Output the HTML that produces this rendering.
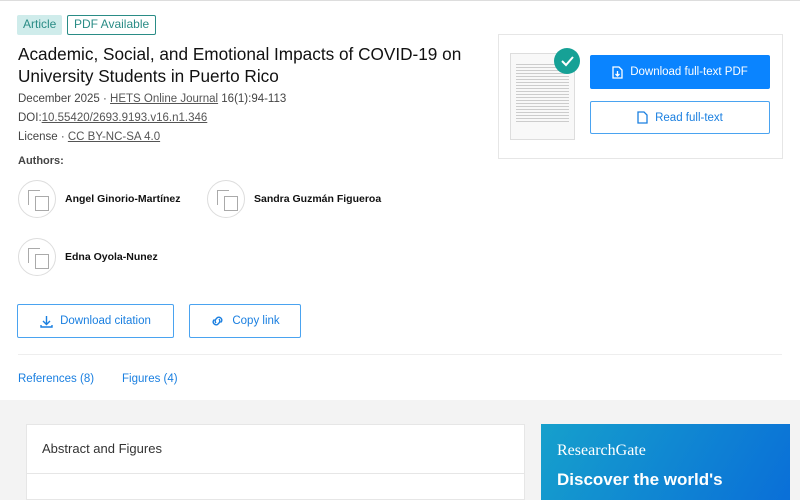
<!DOCTYPE html>
<html><head><meta charset="utf-8"><style>
*{box-sizing:border-box;margin:0;padding:0}
body{width:800px;height:500px;overflow:hidden;background:#f3f3f3;font-family:"Liberation Sans",sans-serif;color:#111;position:relative}
.card{position:absolute;left:0;top:0;width:800px;height:400px;background:#fff;border-top:1px solid #ddd}
.a{position:absolute}
.tag{position:absolute;top:14px;height:20px;font-size:12px;line-height:18px;padding:0 6px;border-radius:2px}
.meta{position:absolute;left:18px;font-size:11.5px;color:#444}
.meta u{color:#555}
.av{position:absolute;width:38px;height:38px;border:1px solid #ddd;border-radius:50%}
.av:before{content:"";position:absolute;left:9px;top:9px;width:11px;height:14px;border:1px solid #aaa;border-right:none;border-bottom:none}
.av:after{content:"";position:absolute;left:16px;top:15px;width:12px;height:13px;border:1px solid #aaa;background:#fff}
.nm{position:absolute;font-size:10.5px;font-weight:bold}
.btn{position:absolute;border:1px solid #4aa3f0;border-radius:2px;color:#1a7fe0;font-size:11.5px;display:flex;align-items:center;justify-content:center;gap:7px}
</style></head><body>
<div class="card">
<div class="tag" style="left:17px;background:#cfeceb;color:#2a8c86">Article</div>
<div class="tag" style="left:67px;border:1px solid #2a8c86;color:#2a8c86;line-height:17px">PDF Available</div>
<div class="a" style="left:18px;top:42px;font-size:17.2px;line-height:22px;color:#111;width:470px">Academic, Social, and Emotional Impacts of COVID-19 on University Students in Puerto Rico</div>
<div class="meta" style="top:92px">December 2025 · <u>HETS Online Journal</u> 16(1):94-113</div>
<div class="meta" style="top:111px">DOI:<u>10.55420/2693.9193.v16.n1.346</u></div>
<div class="meta" style="top:130px">License · <u>CC BY-NC-SA 4.0</u></div>
<div class="meta" style="top:154px;font-size:11px;font-weight:bold;color:#444">Authors:</div>
<div class="av" style="left:18px;top:179px"></div><div class="nm" style="left:65px;top:192px">Angel Ginorio-Martínez</div>
<div class="av" style="left:207px;top:179px"></div><div class="nm" style="left:254px;top:192px">Sandra Guzmán Figueroa</div>
<div class="av" style="left:18px;top:237px"></div><div class="nm" style="left:65px;top:250px">Edna Oyola-Nunez</div>
<div class="btn" style="left:17px;top:303px;width:157px;height:34px"><svg width="13" height="13" viewBox="0 0 13 13" fill="none" stroke="#1a7fe0" stroke-width="1.4"><path d="M6.5 1v8M3 6l3.5 3.5L10 6M1 10v2h11v-2"/></svg>Download citation</div>
<div class="btn" style="left:189px;top:303px;width:112px;height:34px"><svg width="15" height="12" viewBox="0 0 15 12" fill="none" stroke="#1a7fe0" stroke-width="1.4"><path d="M6 8a3 3 0 0 1 0-4l1.5-1.5a3 3 0 0 1 4 4L10.5 7.5M9 4a3 3 0 0 1 0 4L7.5 9.5a3 3 0 0 1-4-4L4.5 4.5"/></svg>Copy link</div>
<div class="a" style="left:18px;top:353px;width:764px;height:1px;background:#eee"></div>
<div class="a" style="left:18px;top:372px;font-size:11.5px;color:#1a7fe0">References (8)</div>
<div class="a" style="left:122px;top:372px;font-size:11.5px;color:#1a7fe0">Figures (4)</div>
<div class="a" style="left:498px;top:33px;width:285px;height:125px;border:1px solid #e6e6e6"></div>
<div class="a" style="left:510px;top:52px;width:65px;height:87px;border:1px solid #ddd;background:#f8f8f8;padding:8px 5px">
<div style="height:60px;background:repeating-linear-gradient(#f8f8f8 0 2px,#ccc 2px 3px)"></div></div>
<div class="a" style="left:554px;top:47px;width:26px;height:26px;border-radius:50%;background:#16a196"><svg width="26" height="26"><path d="M8 13l4 4 7-8" stroke="#fff" stroke-width="2" fill="none"/></svg></div>
<div class="btn" style="left:590px;top:54px;width:180px;height:34px;background:#0a84ff;border-color:#0a84ff;color:#fff"><svg width="11" height="13" viewBox="0 0 11 13" fill="none" stroke="#fff" stroke-width="1.3"><path d="M1 1h6l3 3v8H1z M5.5 5v5M3.5 8l2 2 2-2"/></svg>Download full-text PDF</div>
<div class="btn" style="left:590px;top:100px;width:180px;height:33px"><svg width="11" height="13" viewBox="0 0 11 13" fill="none" stroke="#1a7fe0" stroke-width="1.3"><path d="M1 1h6l3 3v8H1z"/></svg>Read full-text</div>
</div>
<div class="a" style="left:26px;top:424px;width:499px;height:76px;background:#fff;border:1px solid #e6e6e6">
<div style="padding:16px 15px;font-size:13px;color:#333;border-bottom:1px solid #e6e6e6;height:49px">Abstract and Figures</div></div>
<div class="a" style="left:541px;top:424px;width:249px;height:76px;background:linear-gradient(120deg,#16a0cc,#0a6fd8)">
<div style="position:absolute;left:16px;top:18px;font-family:'Liberation Serif',serif;font-size:16px;color:#fff">ResearchGate</div>
<div style="position:absolute;left:16px;top:46px;font-size:17px;font-weight:bold;color:#fff">Discover the world's</div></div>
</body></html>
